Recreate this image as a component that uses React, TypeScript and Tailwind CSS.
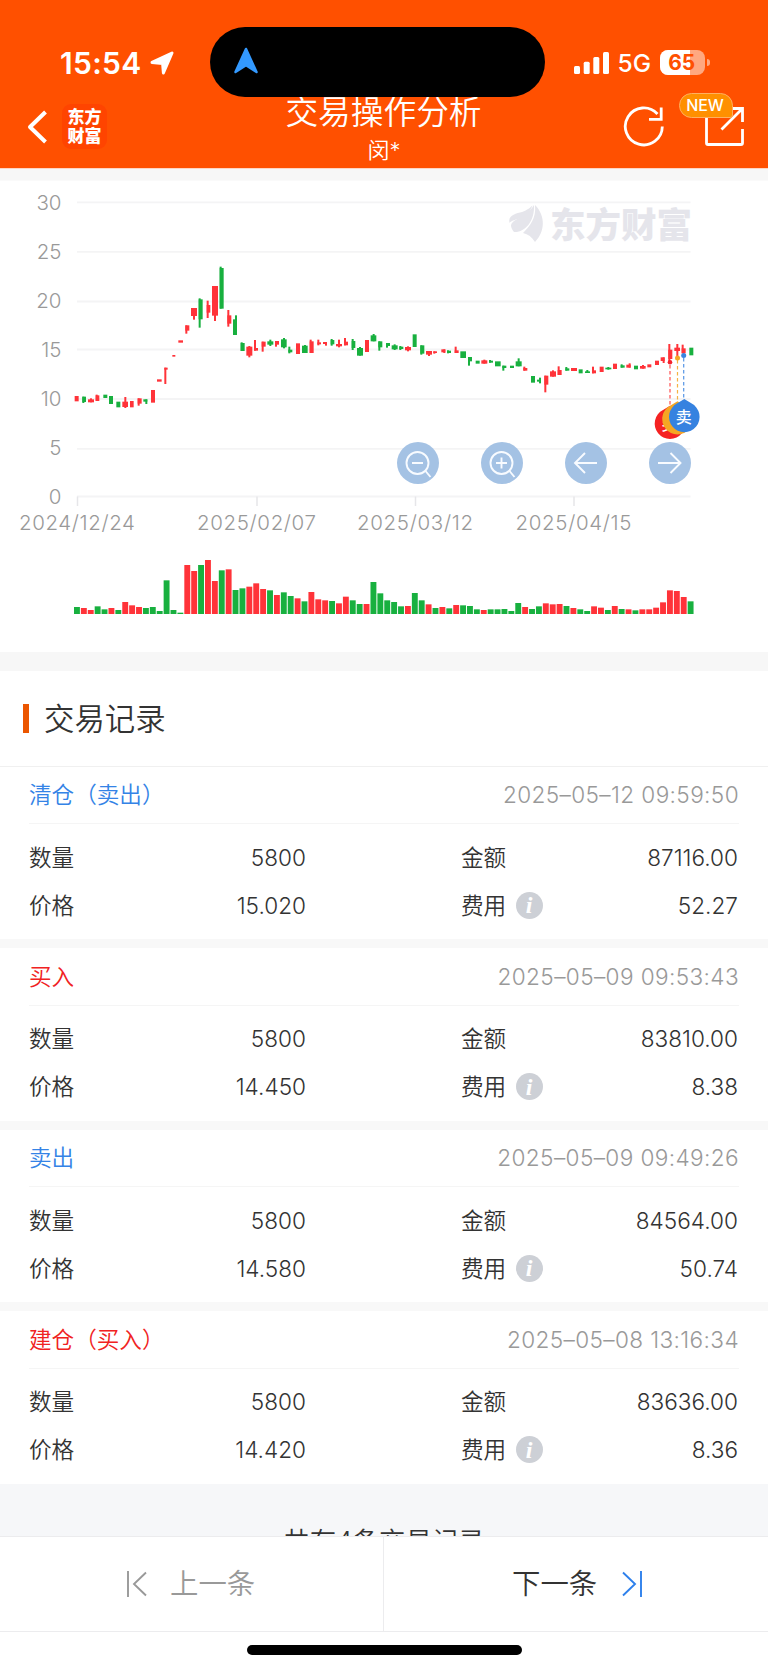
import type { ReactNode } from 'react'

type Trend = 'r' | 'g'

// trend, body x1, x2, top, bottom, then an optional wick: x, top, bottom
type Candle = [Trend, number, number, number, number, number?, number?, number?]

type CandleGroup = {
  x: number
  y: number
  candles: Candle[]
}

type TradeRecord = {
  id: number
  label: string
  side: 'buy' | 'sell'
  time: string
  quantity: string
  amount: string
  price: string
  fee: string
}

const TREND_COLORS: Record<Trend, string> = { r: '#ff3339', g: '#18b03f' }

// Candle geometry is kept in thirds of a pixel
const CANDLE_GROUPS: CandleGroup[] = [
  {
    x: 180,
    y: 210,
    candles: [
      ['r', 44, 56, 438, 454],
      ['g', 67, 78, 440, 456, 67, 440, 459],
      ['r', 84, 102, 448, 457, 90, 445, 457],
      ['r', 107, 118, 436, 453, 107, 434, 453],
      ['g', 130, 142, 434, 444],
      ['g', 147, 159, 438, 462],
      ['g', 169, 181, 455, 472],
      ['r', 187, 204, 455, 471, 193, 441, 474],
      ['r', 210, 221, 453, 472],
      ['r', 233, 245, 445, 461, 233, 445, 467],
      ['g', 250, 262, 448, 455, 256, 448, 462],
      ['r', 273, 285, 420, 458],
      ['r', 291, 305, 388, 395],
      ['r', 313, 323, 353, 359, 313, 353, 402],
      ['r', 337, 346, 315, 320],
      ['r', 355, 369, 271, 278],
      ['r', 376, 388, 226, 242, 376, 226, 251],
      ['r', 393, 411, 174, 198, 399, 174, 209],
      ['g', 416, 428, 148, 208, 416, 145, 233],
      ['r', 440, 451, 165, 188, 440, 152, 204],
      ['r', 456, 474, 108, 197, 462, 108, 213],
      ['g', 479, 491, 54, 176, 479, 50, 176],
      ['r', 502, 514, 196, 221, 502, 180, 230],
      ['g', 519, 531, 208, 255, 525, 196, 255],
      ['g', 542, 554, 279, 303, 542, 277, 303],
      ['r', 559, 577, 290, 317, 565, 288, 322],
      ['r', 582, 594, 294, 302, 582, 270, 302],
      ['r', 605, 617, 275, 290, 605, 275, 305],
      ['g', 622, 640, 274, 284, 628, 269, 288]
    ]
  },
  {
    x: 810,
    y: 420,
    candles: [
      ['r', 15, 27, 63, 74, 15, 63, 80],
      ['g', 33, 50, 58, 82, 39, 54, 85],
      ['g', 55, 67, 89, 97, 55, 80, 100],
      ['r', 78, 90, 70, 102],
      ['g', 96, 113, 77, 99, 102, 75, 99],
      ['r', 119, 131, 64, 99, 119, 59, 99],
      ['r', 142, 153, 67, 73, 142, 59, 76],
      ['r', 159, 171, 66, 72, 165, 66, 77],
      ['g', 182, 193, 60, 73, 182, 57, 77],
      ['r', 198, 216, 72, 79, 204, 59, 82],
      ['r', 222, 234, 65, 76, 222, 54, 76],
      ['g', 245, 256, 63, 84, 245, 57, 90],
      ['g', 261, 279, 84, 107, 267, 81, 107],
      ['r', 285, 297, 60, 96],
      ['g', 302, 319, 46, 64, 308, 42, 64],
      ['g', 325, 337, 64, 82, 325, 64, 92],
      ['g', 348, 360, 69, 78, 348, 69, 83],
      ['g', 365, 383, 76, 88, 371, 73, 90],
      ['g', 388, 400, 80, 87, 388, 78, 90],
      ['r', 405, 423, 81, 91, 411, 79, 94],
      ['g', 428, 440, 43, 81],
      ['g', 451, 463, 76, 101, 451, 76, 104],
      ['r', 468, 486, 93, 104, 474, 93, 108],
      ['r', 490, 501, 94, 99, 490, 94, 101],
      ['r', 514, 526, 88, 97, 520, 88, 99],
      ['g', 531, 543, 92, 99, 531, 91, 100],
      ['r', 554, 566, 91, 99, 554, 80, 99],
      ['g', 571, 588, 94, 114],
      ['g', 594, 606, 111, 124, 594, 111, 137],
      ['g', 617, 629, 122, 131]
    ]
  },
  {
    x: 1440,
    y: 450,
    candles: [
      ['r', 4, 22, 91, 101, 10, 89, 101],
      ['g', 27, 39, 92, 98, 27, 90, 98],
      ['g', 45, 62, 94, 109],
      ['g', 67, 79, 107, 114, 67, 107, 122],
      ['g', 90, 102, 107, 114],
      ['g', 107, 125, 94, 109, 113, 85, 109],
      ['r', 130, 142, 114, 122, 130, 110, 122],
      ['g', 153, 165, 138, 158],
      ['g', 171, 183, 149, 155, 177, 143, 160],
      ['r', 193, 205, 137, 164, 193, 137, 187],
      ['r', 210, 228, 124, 140, 216, 121, 140],
      ['r', 233, 245, 120, 135, 233, 109, 135],
      ['g', 256, 268, 115, 122, 256, 111, 122],
      ['r', 273, 291, 114, 123],
      ['g', 296, 308, 118, 130],
      ['g', 315, 330, 124, 129, 319, 120, 129],
      ['r', 336, 348, 121, 130, 336, 110, 130],
      ['r', 359, 371, 110, 126],
      ['g', 376, 394, 113, 118, 382, 111, 119],
      ['r', 399, 411, 101, 117],
      ['g', 422, 434, 106, 113, 422, 103, 113],
      ['r', 439, 452, 104, 113, 446, 100, 113],
      ['g', 462, 474, 107, 118],
      ['r', 480, 497, 108, 116, 486, 105, 116],
      ['r', 502, 514, 103, 112],
      ['r', 525, 537, 92, 105],
      ['r', 542, 554, 82, 93, 548, 82, 99],
      ['r', 565, 577, 59, 87, 565, 42, 98],
      ['r', 583, 600, 53, 63, 589, 42, 85],
      ['r', 605, 617, 55, 70, 605, 44, 70],
      ['g', 628, 640, 53, 76]
    ]
  }
]

// trend followed by bar height, also in thirds of a pixel
const VOLUMES =
  'g21 r18 r12 g23 g14 r18 g12 r36 r26 r21 g18 g21 g9 g101 g12 g4 r147 r129 g147 r162 r99 g131 r134 g72 g77 r82 r92 r75 g71 r57 g65 g54 r47 g38 r66 r44 r41 g39 r32 r52 g41 g30 r30 g96 g62 g41 g36 g23 r24 g63 g41 r29 g18 r21 g17 r27 g26 g24 g14 r12 g14 g14 g15 g9 g33 r21 g15 g23 r32 r29 r30 g24 r18 g14 g9 r23 r19 g12 r24 g15 r14 g11 r14 r14 r19 r35 r71 r69 r51 g38'.split(
    ' '
  )

const Y_TICKS = [
  { value: '30', y: 22.3 },
  { value: '25', y: 71.8 },
  { value: '20', y: 121.5 },
  { value: '15', y: 169.5 },
  { value: '10', y: 219 },
  { value: '5', y: 268.8 },
  { value: '0', y: 316.5 }
]

const X_TICKS = [
  { label: '2024/12/24', x: 77.5, width: 116 },
  { label: '2025/02/07', x: 257, width: 119 },
  { label: '2025/03/12', x: 415.5, width: 116 },
  { label: '2025/04/15', x: 574, width: 116 }
]

const RECORDS: TradeRecord[] = [
  {
    id: 1,
    label: '清仓（卖出）',
    side: 'sell',
    time: '2025–05–12 09:59:50',
    quantity: '5800',
    amount: '87116.00',
    price: '15.020',
    fee: '52.27'
  },
  {
    id: 2,
    label: '买入',
    side: 'buy',
    time: '2025–05–09 09:53:43',
    quantity: '5800',
    amount: '83810.00',
    price: '14.450',
    fee: '8.38'
  },
  {
    id: 3,
    label: '卖出',
    side: 'sell',
    time: '2025–05–09 09:49:26',
    quantity: '5800',
    amount: '84564.00',
    price: '14.580',
    fee: '50.74'
  },
  {
    id: 4,
    label: '建仓（买入）',
    side: 'buy',
    time: '2025–05–08 13:16:34',
    quantity: '5800',
    amount: '83636.00',
    price: '14.420',
    fee: '8.36'
  }
]

function StatusBar() {
  return (
    <div className="flex h-[97px] text-white">
      <div className="flex w-[210px] items-center pt-[28px] pl-[60px]">
        <span className="w-[81px] text-[30px] leading-none font-semibold tracking-[0.3px] whitespace-nowrap">15:54</span>
        <svg className="ml-[9px] h-[24px] w-[24px]" viewBox="0 0 24 24" fill="currentColor">
          <path
            d="M22 2 13.4 22 12.6 12.4 2 11.4Z"
            stroke="currentColor"
            strokeWidth="3"
            strokeLinejoin="round"
          />
        </svg>
      </div>
      <div className="z-10 mt-[27px] h-[70px] w-[334.5px] rounded-full bg-black">
        <svg className="mt-[20px] ml-[24px] h-[27px] w-[24px]" viewBox="0 0 24 27">
          <path
            d="M12 2 22.5 25 12 18.2 1.5 25Z"
            fill="#3399ff"
            stroke="#3399ff"
            strokeWidth="2.5"
            strokeLinejoin="round"
          />
        </svg>
      </div>
      <div className="flex items-center pt-[28px] pl-[29px]">
        <svg className="h-[22px] w-[35px]" viewBox="0 0 35 22" fill="currentColor">
          <rect x="0" y="14" width="6" height="8" rx="1.5" />
          <rect x="9.7" y="9.7" width="6" height="12.3" rx="1.5" />
          <rect x="19.3" y="5" width="6" height="17" rx="1.5" />
          <rect x="29" y="0" width="6" height="22" rx="1.5" />
        </svg>
        <span className="mt-[2px] ml-[9px] w-[33px] text-[24.5px] leading-none font-medium">5G</span>
        <div className="relative ml-[9px] flex h-[25px] w-[45.5px] items-center justify-center overflow-hidden rounded-[8px] bg-[#ffa880]">
          <div className="absolute inset-y-0 left-0 w-[30px] bg-white" />
          <span className="relative pr-[1px] text-[21px] leading-none font-bold text-[#ff5000]">65</span>
        </div>
        <div className="ml-[2px] h-[7px] w-[2.5px] rounded-r-full bg-[#ffa880]" />
      </div>
    </div>
  )
}

function Header() {
  return (
    <header className="flex h-[168px] shrink-0 flex-col bg-[#ff5000]">
      <StatusBar />
      <div className="grid h-[71px] grid-cols-[240px_288px_240px] text-white">
        <div className="flex pl-[27px]">
          <svg className="mt-[13px] h-[34px] w-[21px]" viewBox="0 0 21 34" fill="none" stroke="currentColor" strokeWidth="4">
            <path d="M18.5 2 3 17l15.500 15" strokeLinejoin="round" />
          </svg>
          <div className="mt-[7px] ml-[14px] flex h-[45px] w-[45px] flex-col items-center justify-center rounded-[9px] bg-[#ff4400] text-[17px] leading-[18.5px] font-black">
            <span>东方</span>
            <span>财富</span>
          </div>
        </div>
        <div className="flex flex-col items-center">
          <h1 className="-mt-[7px] mr-[1px] text-[32.7px] leading-[44px] whitespace-nowrap">交易操作分析</h1>
          <p className="mt-[1px] text-[22px] leading-[30px]">闵*</p>
        </div>
        <div className="flex pl-[95px]">
          <svg className="mt-[8px] h-[42px] w-[42px]" viewBox="0 0 42 42" fill="none" stroke="currentColor" strokeWidth="2.8">
            <path d="M39.300 21.500A18.500 18.500 0 1 1 34.500 9" />
            <path d="M38.200 2.500V14.300H26" />
          </svg>
          <div className="relative mt-[8px] ml-[39px] h-[42px] w-[42px]">
            <svg className="h-[42px] w-[42px]" viewBox="0 0 42 42" fill="none" stroke="currentColor" strokeWidth="2.8">
              <path d="M27 3.500H38.500V17M38.500 3.500 17.500 24.500M38.500 24V38Q38.500 39.500 37 39.500H4Q2.500 39.500 2.500 38V4" />
            </svg>
            <span className="absolute -top-[12.500px] -left-[25px] flex h-[25px] w-[54px] items-center justify-center rounded-[12.5px] rounded-br-[3px] border border-[#ffb060] bg-[#ff9000] pr-[2px] text-[16px] leading-none font-medium tracking-[-0.1px]">
              NEW
            </span>
          </div>
        </div>
      </div>
    </header>
  )
}

function TradePin({ x, y, color, label }: { x: number; y: number; color: string; label?: string }) {
  return (
    <g transform={`translate(${x} ${y})`}>
      <path d="M0-17.800 7-13.500A15.300 15.300 0 1 1-7-13.500Z" fill={color} />
      {label && (
        <text x="-.5" y="6" textAnchor="middle" fontSize="16" fontWeight="500" fill="#fff">
          {label}
        </text>
      )}
    </g>
  )
}

function RoundControl({ x, children }: { x: number; children: ReactNode }) {
  return (
    <g transform={`translate(${x} 283)`} fill="none" stroke="#f8fbff" strokeWidth="1.900">
      <circle r="21" fill="#a4c2e4" stroke="none" />
      {children}
    </g>
  )
}

function PriceChart() {
  return (
    <svg className="block h-[472px] w-[768px] shrink-0 bg-white" viewBox="0 0 768 472">
      <path d="M0 .5H768" stroke="#fafafa" />
      {Y_TICKS.map((tick, i) => (
        <g key={tick.value}>
          <path d={`M77 ${tick.y}H690.500`} stroke="#f4f4f5" strokeWidth="1.800" />
          <text x="61.5" y={29.8 + i * 49.1} textAnchor="end" fontSize="20.500" fill="#999">
            {tick.value}
          </text>
        </g>
      ))}
      {X_TICKS.map((tick) => (
        <g key={tick.label}>
          <path d={`M${tick.x} 316.500V326`} stroke="#e6e6e9" strokeWidth="1.500" />
          <text
            x={tick.x - tick.width / 2 - 0.5}
            y="350"
            fontSize="20.500"
            textLength={tick.width}
            fill="#999"
          >
            {tick.label}
          </text>
        </g>
      ))}

      <g fill="#e5e5eb">
        <path d="M509.500 43C508 36 514 34 520 32.500C526 31 529 28.500 532.500 25.500C530 32 526 36 521 38C514 40 511 41 509.500 43Z" />
        <path d="M534 25C529 34 521 36 514 41C510 44 510 47 514 52C524 53 535 42 534 25Z" />
        <path d="M535 25C536.500 38 530 46 523 53C528 54 532 57 535 62C545 52 546 36 535 25Z" />
        <text x="550" y="57.5" fontSize="35.500" fontWeight="900" textLength="142">
          东方财富
        </text>
      </g>

      {CANDLE_GROUPS.map((group) => (
        <g key={group.x} transform={`scale(.33333) translate(${group.x} ${group.y})`}>
          {group.candles.map(([trend, x1, x2, top, bottom, wickX, wickTop = 0, wickBottom = 0]) => (
            <g key={x1} fill={TREND_COLORS[trend]}>
              <rect x={x1} y={top} width={x2 - x1} height={bottom - top} />
              {wickX !== undefined && <rect x={wickX} y={wickTop} width="6" height={wickBottom - wickTop} />}
            </g>
          ))}
        </g>
      ))}

      <g fill="none" strokeWidth="1.200" strokeDasharray="3.500 2.500" opacity=".85">
        <path d="M670 185V226" stroke="#f33" />
        <path d="M677.500 180V222" stroke="#f5a623" />
        <path d="M683.700 178V220" stroke="#3a84e0" />
      </g>
      <circle cx="670" cy="182.300" r="2.300" fill="#f5222d" />
      <circle cx="677.500" cy="178" r="2.500" fill="#f5a623" />
      <circle cx="683.700" cy="175.500" r="2.500" fill="#3a84e0" />
      <TradePin x={670} y={243.5} color="#f52222" label="买" />
      <TradePin x={677.5} y={239} color="#f5a623" />
      <TradePin x={684.3} y={236.8} color="#3682e0" label="卖" />

      <RoundControl x={418}>
        <circle cx="-.5" cy="0" r="11" />
        <path d="M-6 0H5M7.500 8 12.500 14" />
      </RoundControl>
      <RoundControl x={502}>
        <circle cx="-.5" cy="0" r="11" />
        <path d="M-6 0H5M-.5-5.500V5.500M7.500 8 12.500 14" />
      </RoundControl>
      <RoundControl x={586}>
        <path d="M11 0H-11M-1-10-11 0-1 10" />
      </RoundControl>
      <RoundControl x={670}>
        <path d="M-12 0H10.500M.5-10 10.500 0 .5 10" />
      </RoundControl>

      {VOLUMES.map((item, i) => {
        const height = Number(item.slice(1)) / 3
        return (
          <rect
            key={i}
            x={74 + i * 6.895}
            y={434 - height}
            width="5.900"
            height={height}
            fill={TREND_COLORS[item[0] as Trend]}
          />
        )
      })}
    </svg>
  )
}

function InfoIcon() {
  return (
    <span className="ml-[10px] flex h-[27px] w-[27px] items-center justify-center rounded-full bg-[#cdd0d6] pr-[1px] font-['Liberation_Serif',serif] text-[24px] leading-none font-bold text-white italic">
      i
    </span>
  )
}

function RecordCard({ record }: { record: TradeRecord }) {
  return (
    <article className="h-[172.5px] shrink-0 bg-white px-[29px] text-[22.6px] text-[#333]">
      <div className="flex h-[57.5px] items-center justify-between border-b border-[#f5f5f5] pt-px">
        <span className={record.side === 'buy' ? 'text-[#f02222]' : 'text-[#3483e6]'}>{record.label}</span>
        <span className="tracking-[0.38px] text-[#999]">{record.time}</span>
      </div>
      <dl className="grid grid-cols-[277px_432px] pt-[9.5px]">
        <div className="flex h-12 items-center justify-between">
          <dt>数量</dt>
          <dd>{record.quantity}</dd>
        </div>
        <div className="flex h-12 items-center justify-between pl-[155px]">
          <dt>金额</dt>
          <dd>{record.amount}</dd>
        </div>
        <div className="flex h-12 items-center justify-between">
          <dt>价格</dt>
          <dd>{record.price}</dd>
        </div>
        <div className="flex h-12 items-center justify-between pl-[155px]">
          <dt className="flex items-center">
            费用
            <InfoIcon />
          </dt>
          <dd>{record.fee}</dd>
        </div>
      </dl>
    </article>
  )
}

function BottomNav() {
  return (
    <footer className="z-10 flex h-[134px] shrink-0 flex-col items-center bg-white">
      <div className="grid h-[96px] w-full grid-cols-2 border-y border-[#ececee] text-[28.4px]">
        <button className="flex items-center border-r border-[#ececee] pl-[126px] text-[#999]">
          <svg className="h-[28px] w-[22px]" viewBox="0 0 22 28" fill="none" stroke="currentColor" strokeWidth="1.900">
            <path d="M2 1V27M20 2.500 8 14 20 25.500" />
          </svg>
          <span className="mt-px ml-[22px] leading-none">上一条</span>
        </button>
        <button className="flex items-center pl-[128px] text-[#333]">
          <span className="mt-px leading-none">下一条</span>
          <svg className="ml-[24px] h-[28px] w-[22px]" viewBox="0 0 22 28" fill="none" stroke="#2e80ec" strokeWidth="1.900">
            <path d="M20 1V27M2 2.500 14 14 2 25.500" />
          </svg>
        </button>
      </div>
      <div className="mt-[13px] h-[10px] w-[275px] rounded-full bg-black" />
    </footer>
  )
}

function App() {
  return (
    <main className="flex h-[1670px] w-[768px] flex-col overflow-hidden bg-[#f7f7f7] font-[Inter,'Noto_Sans_CJK_SC',sans-serif] font-[350]">
      <Header />
      <div className="h-[12px] shrink-0 border-t border-[#ffd5c2]" />
      <PriceChart />
      <section className="mt-[19px] flex shrink-0 flex-col">
        <div className="flex h-[95.5px] items-center border-b border-[#f0f0f0] bg-white pl-[23px]">
          <span className="mt-px h-[29px] w-[6px] bg-[#eb5600]" />
          <h2 className="mt-px ml-[15px] text-[30.4px] leading-none text-[#333]">交易记录</h2>
        </div>
        <div className="flex flex-col gap-[9px] bg-[#f8f8f8]">
          {RECORDS.map((record) => (
            <RecordCard key={record.id} record={record} />
          ))}
        </div>
      </section>
      <div className="flex min-h-0 flex-1 justify-center overflow-hidden bg-[#f6f7f9] pt-[38px] text-[26.4px] leading-[38px] text-[#333]">
        共有4条交易记录
      </div>
      <BottomNav />
    </main>
  )
}

export default App
